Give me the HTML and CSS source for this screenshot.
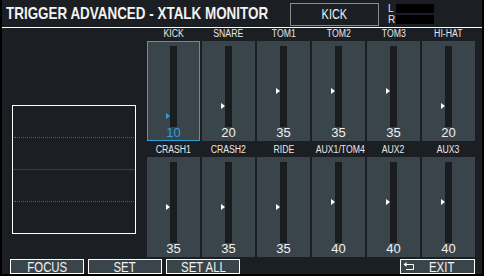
FILE: index.html
```html
<!DOCTYPE html>
<html lang="en">
<head>
    <meta charset="UTF-8">
    <title>Trigger Advanced - Xtalk Monitor</title>
    <link rel="stylesheet" href="styles.css">
</head>
<body>
    <div class="screen">
        <header class="topbar">
            <h1 class="title"><span class="narrow">TRIGGER ADVANCED - XTALK MONITOR</span></h1>
            <div class="pad-name"><span class="narrow">KICK</span></div>
            <div class="lr">
                <div class="lr-row"><span>L</span><i class="lr-bar"></i></div>
                <div class="lr-row"><span>R</span><i class="lr-bar"></i></div>
            </div>
        </header>

        <main class="content">
            <div class="scope">
                <div class="scope-row"></div>
                <div class="scope-row dotted"></div>
                <div class="scope-row solid"></div>
                <div class="scope-row dotted"></div>
            </div>

            <div class="pads">
                <div class="pad selected">
                    <div class="pad-label"><span class="narrow">KICK</span></div>
                    <div class="pad-card"><div class="slot"><i class="marker" style="top: 67px"></i></div><div class="value">10</div></div>
                </div>
                <div class="pad">
                    <div class="pad-label"><span class="narrow">SNARE</span></div>
                    <div class="pad-card"><div class="slot"><i class="marker" style="top: 57px"></i></div><div class="value">20</div></div>
                </div>
                <div class="pad">
                    <div class="pad-label"><span class="narrow">TOM1</span></div>
                    <div class="pad-card"><div class="slot"><i class="marker" style="top: 42px"></i></div><div class="value">35</div></div>
                </div>
                <div class="pad">
                    <div class="pad-label"><span class="narrow">TOM2</span></div>
                    <div class="pad-card"><div class="slot"><i class="marker" style="top: 42px"></i></div><div class="value">35</div></div>
                </div>
                <div class="pad">
                    <div class="pad-label"><span class="narrow">TOM3</span></div>
                    <div class="pad-card"><div class="slot"><i class="marker" style="top: 42px"></i></div><div class="value">35</div></div>
                </div>
                <div class="pad">
                    <div class="pad-label"><span class="narrow">HI-HAT</span></div>
                    <div class="pad-card"><div class="slot"><i class="marker" style="top: 57px"></i></div><div class="value">20</div></div>
                </div>

                <div class="pad">
                    <div class="pad-label"><span class="narrow">CRASH1</span></div>
                    <div class="pad-card"><div class="slot"><i class="marker" style="top: 42px"></i></div><div class="value">35</div></div>
                </div>
                <div class="pad">
                    <div class="pad-label"><span class="narrow">CRASH2</span></div>
                    <div class="pad-card"><div class="slot"><i class="marker" style="top: 42px"></i></div><div class="value">35</div></div>
                </div>
                <div class="pad">
                    <div class="pad-label"><span class="narrow">RIDE</span></div>
                    <div class="pad-card"><div class="slot"><i class="marker" style="top: 42px"></i></div><div class="value">35</div></div>
                </div>
                <div class="pad">
                    <div class="pad-label"><span class="narrow">AUX1/TOM4</span></div>
                    <div class="pad-card"><div class="slot"><i class="marker" style="top: 37px"></i></div><div class="value">40</div></div>
                </div>
                <div class="pad">
                    <div class="pad-label"><span class="narrow">AUX2</span></div>
                    <div class="pad-card"><div class="slot"><i class="marker" style="top: 37px"></i></div><div class="value">40</div></div>
                </div>
                <div class="pad">
                    <div class="pad-label"><span class="narrow">AUX3</span></div>
                    <div class="pad-card"><div class="slot"><i class="marker" style="top: 37px"></i></div><div class="value">40</div></div>
                </div>
            </div>
        </main>

        <footer class="buttons">
            <div class="btn"><span class="narrow">FOCUS</span></div>
            <div class="btn"><span class="narrow">SET</span></div>
            <div class="btn"><span class="narrow">SET ALL</span></div>
            <div class="btn exit">
                <svg class="exit-icon" width="12" height="9" viewBox="0 0 12 9">
                    <path d="M3 2.5 H10.5 V7.5 H3" fill="none" stroke="#fff" stroke-width="1"/>
                    <path d="M0.5 2.5 L3.5 0 V5 Z" fill="#fff"/>
                </svg>
                <span class="exit-text"><span class="narrow">EXIT</span></span>
            </div>
        </footer>
    </div>
</body>
</html>
```

FILE: styles.css
```css
body {
    margin: 0;
    background: #000;
    width: 484px;
    height: 276px;
    overflow: hidden;
    font-family: "Liberation Sans", Arial, sans-serif;
    color: #f2f2f2;
}

/* the device font is a condensed face, so squeeze Arial widths */
.narrow {
    display: inline-block;
    white-space: nowrap;
    transform: scaleX(0.78);
    transform-origin: center;
}

.screen {
    margin-left: 2px;
    width: 480px;
    height: 274px;
    background: #1b1e22;
    display: flex;
    flex-direction: column;
}

/* top bar */
.topbar {
    height: 27px;
    border-bottom: 1px solid #fff;
    display: flex;
    align-items: flex-start;
}

.title {
    margin: 0;
    padding-left: 4px;
    width: 288px;
    box-sizing: border-box;
    font-size: 17px;
    font-weight: bold;
    line-height: 28px;
    white-space: nowrap;
}

.title .narrow {
    transform: scaleX(0.79);
    transform-origin: left center;
}

.pad-name {
    margin-top: 3px;
    width: 89px;
    height: 23px;
    box-sizing: border-box;
    border: 1px solid #8a8a8a;
    text-align: center;
    font-size: 14px;
    line-height: 21px;
}

.lr {
    margin: 4px 0 0 9px;
    display: flex;
    flex-direction: column;
    gap: 2px;
}

.lr-row {
    display: flex;
    align-items: center;
    height: 9px;
}

.lr-row span {
    width: 8px;
    font-size: 10px;
    line-height: 9px;
    color: #e6e6e6;
}

.lr-bar {
    width: 38px;
    height: 9px;
    background: #000;
}

/* content */
.content {
    height: 229px;
    display: flex;
    padding-left: 10px;
}

.scope {
    margin-top: 77px;
    width: 124px;
    height: 129px;
    box-sizing: border-box;
    border: 1px solid #fff;
    display: flex;
    flex-direction: column;
}

.scope-row {
    height: 31px;
}

.scope-row.dotted {
    border-top: 1px dotted #5b5f63;
    margin: 0 1px;
}

.scope-row.solid {
    border-top: 1px solid #37403f;
}

.pads {
    margin-left: 11px;
    display: grid;
    grid-template-columns: repeat(6, 53px);
    grid-template-rows: 113px 116px;
    column-gap: 2px;
}

.pad {
    display: flex;
    flex-direction: column;
    justify-content: flex-end;
}

.pad-label {
    font-size: 10px;
    line-height: 10px;
    padding-bottom: 2px;
    text-align: center;
    color: #e8e8e8;
}

.pad-label .narrow {
    transform: scaleX(0.87);
}

.pad-card {
    height: 100px;
    box-sizing: border-box;
    background: #3a454b;
    padding-top: 5px;
    display: flex;
    flex-direction: column;
    align-items: center;
}

.slot {
    position: relative;
    width: 7px;
    height: 81px;
    background: #1a1d20;
}

.marker {
    position: absolute;
    left: -4px;
    width: 0;
    height: 0;
    border-left: 4px solid #fff;
    border-top: 3.5px solid transparent;
    border-bottom: 3.5px solid transparent;
}

.value {
    font-size: 13px;
    line-height: 12px;
    color: #f0f0f0;
}

.pad.selected .pad-card {
    border: 1px solid #2f9fd8;
    padding-top: 4px;
}

.pad.selected .marker {
    border-left-color: #2f9fe0;
}

.pad.selected .value {
    color: #2f9fe0;
}

/* bottom buttons */
.buttons {
    margin-top: 2px;
    padding: 0 7px 0 8px;
    display: flex;
    gap: 4px;
}

.btn {
    width: 74px;
    height: 15px;
    box-sizing: border-box;
    border: 1px solid #fff;
    background: #3a454b;
    text-align: center;
    font-size: 15px;
    line-height: 14px;
}

.btn .narrow {
    transform: scaleX(0.76);
}

.btn.exit {
    margin-left: auto;
    width: 75px;
    display: flex;
    align-items: center;
    padding-left: 2px;
}

.exit-icon {
    display: block;
}

.exit-text {
    flex: 1;
    text-align: center;
    padding-right: 6px;
}
```
